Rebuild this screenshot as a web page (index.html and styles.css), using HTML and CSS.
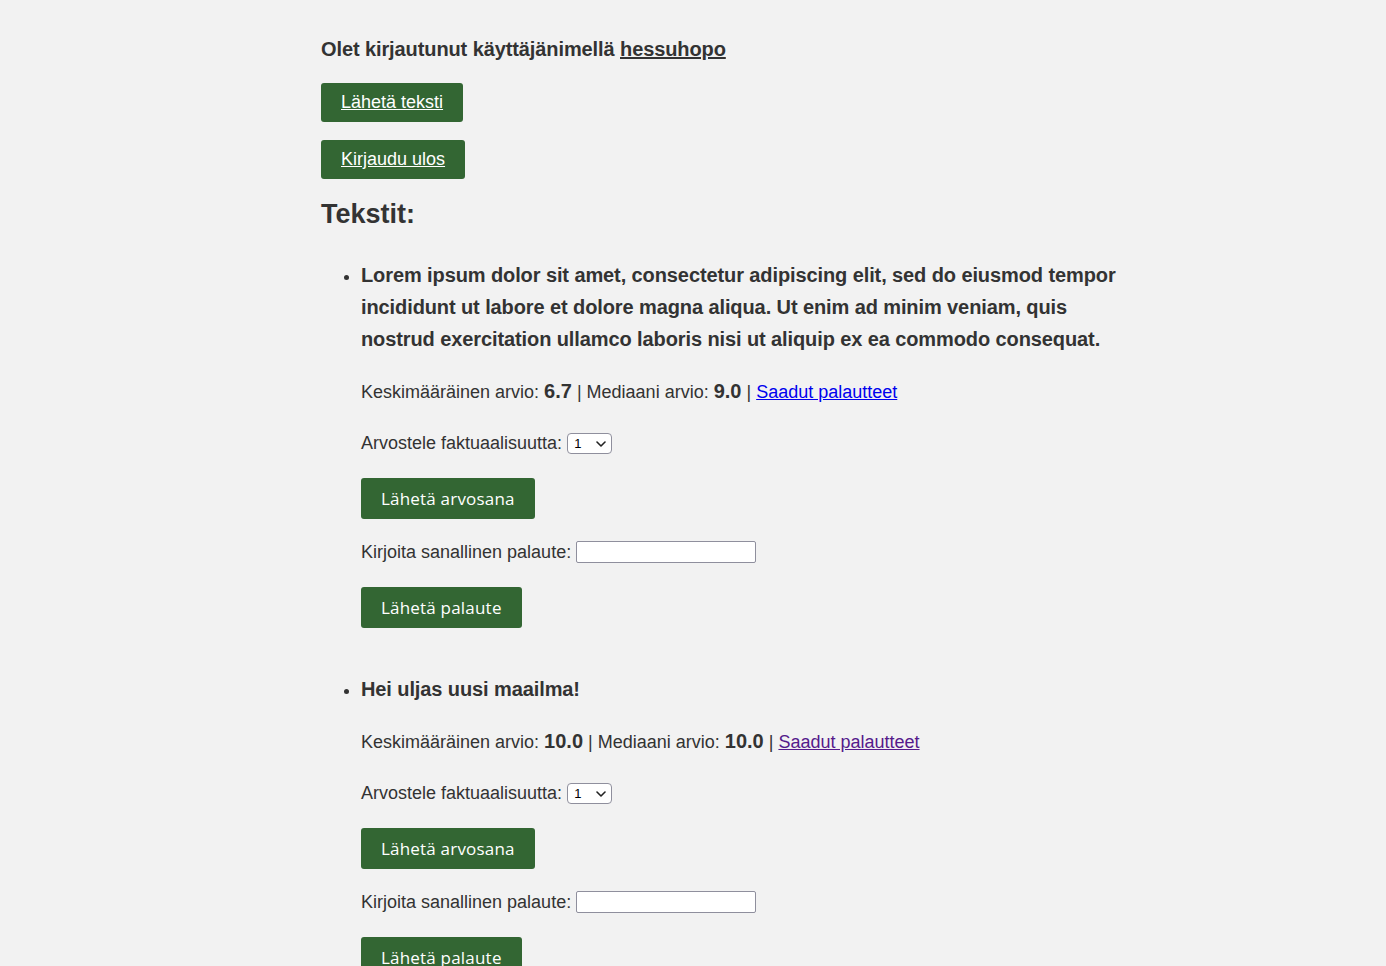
FILE: index.html
```html
<!DOCTYPE html>
<html lang="fi">
<head>
<meta charset="utf-8">
<title>Tekstit</title>
<link rel="stylesheet" href="styles.css">
</head>
<body>
<div class="page">
  <p class="logged">Olet kirjautunut käyttäjänimellä <a href="#" class="user">hessuhopo</a></p>
  <div class="actions">
    <a href="#" class="link-btn">Lähetä teksti</a>
    <a href="#" class="link-btn">Kirjaudu ulos</a>
  </div>
  <h2 class="title">Tekstit:</h2>
  <ul class="texts">
    <li class="text-item">
      <p class="text-body">Lorem ipsum dolor sit amet, consectetur adipiscing elit, sed do eiusmod tempor incididunt ut labore et dolore magna aliqua. Ut enim ad minim veniam, quis nostrud exercitation ullamco laboris nisi ut aliquip ex ea commodo consequat.</p>
      <p class="row stats">Keskimääräinen arvio: <b>6.7</b> | Mediaani arvio: <b>9.0</b> | <a href="#" class="fb">Saadut palautteet</a></p>
      <div class="row sel-row">Arvostele faktuaalisuutta: <span class="select-wrap"><select class="grade"><option>1</option><option>2</option><option>3</option><option>4</option><option>5</option></select><svg class="chev" width="10" height="6" viewBox="0 0 10 6"><path d="M1 1 L5 5 L9 1" fill="none" stroke="#222" stroke-width="1.6" stroke-linecap="round" stroke-linejoin="round"/></svg></span></div>
      <div class="btn-wrap btn-grade"><button class="btn">Lähetä arvosana</button></div>
      <div class="row input-row">Kirjoita sanallinen palaute: <input type="text" class="fb-input"></div>
      <div class="btn-wrap btn-fb"><button class="btn">Lähetä palaute</button></div>
    </li>
    <li class="text-item">
      <p class="text-body">Hei uljas uusi maailma!</p>
      <p class="row stats">Keskimääräinen arvio: <b>10.0</b> | Mediaani arvio: <b>10.0</b> | <a href="#" class="fb visited">Saadut palautteet</a></p>
      <div class="row sel-row">Arvostele faktuaalisuutta: <span class="select-wrap"><select class="grade"><option>1</option><option>2</option><option>3</option><option>4</option><option>5</option></select><svg class="chev" width="10" height="6" viewBox="0 0 10 6"><path d="M1 1 L5 5 L9 1" fill="none" stroke="#222" stroke-width="1.6" stroke-linecap="round" stroke-linejoin="round"/></svg></span></div>
      <div class="btn-wrap btn-grade"><button class="btn">Lähetä arvosana</button></div>
      <div class="row input-row">Kirjoita sanallinen palaute: <input type="text" class="fb-input"></div>
      <div class="btn-wrap btn-fb"><button class="btn">Lähetä palaute</button></div>
    </li>
  </ul>
</div>
</body>
</html>
```

FILE: styles.css
```css
html, body {
  margin: 0;
  padding: 0;
  background: #f2f2f2;
}

body {
  font-family: "Liberation Sans", Arial, sans-serif;
  color: #333333;
  font-size: 18px;
}

.page {
  width: 800px;
  margin-left: calc(50% - 372px);
  padding-top: 37px;
}

.logged {
  margin: 0;
  font-size: 20px;
  line-height: 24px;
  font-weight: bold;
  letter-spacing: -0.1px;
}

.user {
  color: #333333;
  text-decoration: underline;
}

.actions {
  display: flex;
  flex-direction: column;
  align-items: flex-start;
  gap: 18px;
  margin-top: 22px;
}

.link-btn {
  display: block;
  background: #336633;
  color: #ffffff;
  font-size: 18px;
  line-height: 21px;
  padding: 9px 20px;
  border-radius: 3px;
  text-decoration: underline;
}

.title {
  margin: 19px 0 0 0;
  font-size: 27px;
  line-height: 32px;
  font-weight: bold;
}

.texts {
  margin: 29px 0 0 0;
  padding-left: 40px;
}

.text-item {
  display: list-item;
}

.text-item + .text-item {
  margin-top: 45px;
}

.text-body {
  margin: 0;
  font-size: 20px;
  line-height: 32px;
  font-weight: bold;
  letter-spacing: -0.1px;
}

.row {
  margin: 0;
  line-height: 28px;
  display: flex;
  align-items: center;
  white-space: pre;
}

.stats {
  display: block;
  margin-top: 22px;
}

.stats b {
  font-weight: bold;
  font-size: 20px;
}

.fb {
  color: #0000ee;
}

.fb.visited {
  color: #551a8b;
}

.sel-row {
  margin-top: 23px;
}

.select-wrap {
  position: relative;
  display: inline-flex;
}

.grade {
  appearance: none;
  -webkit-appearance: none;
  width: 45px;
  height: 21px;
  font-family: "Liberation Sans", Arial, sans-serif;
  font-size: 13px;
  color: #000;
  background: #ffffff;
  border: 1px solid #8f8f9d;
  border-radius: 4px;
  padding: 0 0 0 6px;
  margin: 0;
}

.chev {
  position: absolute;
  right: 6px;
  top: 8px;
  pointer-events: none;
}

.btn-wrap {
  display: block;
}

.btn {
  display: block;
  background: #336633;
  color: #ffffff;
  border: none;
  border-radius: 3px;
  font-family: "Open Sans", "Noto Sans", sans-serif;
  font-size: 17px;
  letter-spacing: 0.2px;
  line-height: 21px;
  padding: 10px 20px;
  cursor: pointer;
}

.btn-grade {
  margin-top: 21px;
}

.input-row {
  margin-top: 19px;
}

.fb-input {
  width: 180px;
  height: 22px;
  box-sizing: border-box;
  border: 1px solid #8f8f9d;
  border-radius: 2px;
  background: #ffffff;
  margin: 0;
  padding: 0 3px;
}

.btn-fb {
  margin-top: 21px;
}
```
